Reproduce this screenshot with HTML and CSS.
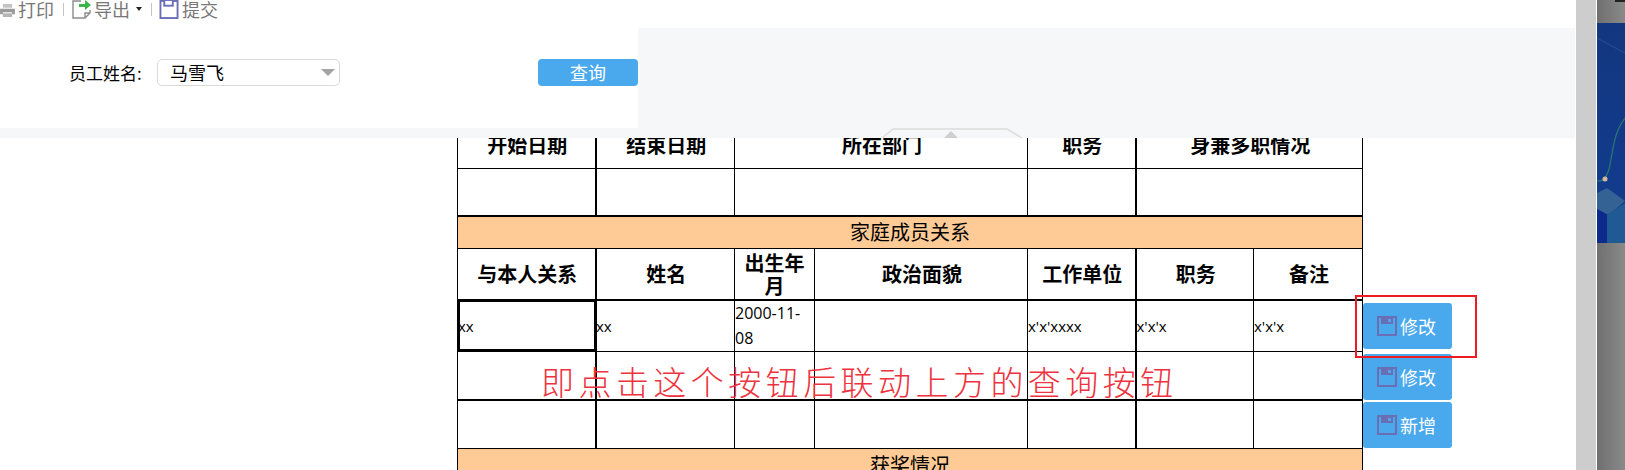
FILE: index.html
```html
<!DOCTYPE html>
<html lang="zh-CN">
<head>
<meta charset="utf-8">
<title>员工信息</title>
<link rel="stylesheet" href="styles.css">
</head>
<body>
<div class="screen">
  <main class="page">
    <table class="sheet">
      <colgroup>
        <col class="c1"><col class="c2"><col class="c3"><col class="c4"><col class="c5"><col class="c6"><col class="c7"><col class="c8">
      </colgroup>
      <tbody>
        <tr class="r-head1">
          <th class="tr">开始日期</th><th>结束日期</th><th colspan="2">所在部门</th><th class="tr">职务</th><th colspan="2">身兼多职情况</th><td class="free"></td>
        </tr>
        <tr class="r-empty1">
          <td class="tr"></td><td></td><td colspan="2"></td><td class="tr"></td><td colspan="2"></td><td class="free"></td>
        </tr>
        <tr class="r-band1 tt">
          <td colspan="7" class="band">家庭成员关系</td><td class="free"></td>
        </tr>
        <tr class="r-head2">
          <th class="tr">与本人关系</th><th>姓名</th><th class="tight">出生年月</th><th>政治面貌</th><th class="tr">工作单位</th><th>职务</th><th>备注</th><td class="free"></td>
        </tr>
        <tr class="r-data tt">
          <td class="sel">xx</td><td>xx</td><td class="date">2000-11-08</td><td></td><td class="tr">x'x'xxxx</td><td>x'x'x</td><td>x'x'x</td>
          <td class="free"><button class="act" type="button"><svg class="disk" viewBox="0 0 20 20"><rect x="1" y="1" width="18" height="18" fill="none" stroke="#6a6fb5" stroke-width="2"/><rect x="4" y="2" width="12" height="6" fill="#6a6fb5"/><rect x="11" y="3" width="3" height="3" fill="#4aa8ec"/></svg>修改</button></td>
        </tr>
        <tr class="r-row">
          <td class="tr"></td><td></td><td></td><td></td><td class="tr"></td><td></td><td></td>
          <td class="free"><button class="act" type="button"><svg class="disk" viewBox="0 0 20 20"><rect x="1" y="1" width="18" height="18" fill="none" stroke="#6a6fb5" stroke-width="2"/><rect x="4" y="2" width="12" height="6" fill="#6a6fb5"/><rect x="11" y="3" width="3" height="3" fill="#4aa8ec"/></svg>修改</button></td>
        </tr>
        <tr class="r-last tt">
          <td class="tr"></td><td></td><td></td><td></td><td class="tr"></td><td></td><td></td>
          <td class="free"><button class="act" type="button"><svg class="disk" viewBox="0 0 20 20"><rect x="1" y="1" width="18" height="18" fill="none" stroke="#6a6fb5" stroke-width="2"/><rect x="4" y="2" width="12" height="6" fill="#6a6fb5"/><rect x="11" y="3" width="3" height="3" fill="#4aa8ec"/></svg>新增</button></td>
        </tr>
        <tr class="r-band2">
          <td colspan="7" class="band">获奖情况</td><td class="free"></td>
        </tr>
      </tbody>
    </table>
    <div class="note">即点击这个按钮后联动上方的查询按钮</div>
    <div class="redbox"></div>
  </main>
  <div class="scrollbar"></div>
  <div class="behind">
    <div class="wall">
      <b class="speck"></b>
      <svg class="wall-art" viewBox="0 0 28 220" preserveAspectRatio="none">
        <polygon points="0,170 10,165 28,178 12,192 0,186" fill="#3d6c96" opacity=".8"/>
        <polygon points="10,192 28,180 28,220 10,220" fill="#1f5a94"/>
        <polygon points="0,186 10,192 10,220 0,220" fill="#0b2a8c"/>
        <path d="M0 158C6 158 8 158 12 146C16 130 16 110 28 95" fill="none" stroke="#2a7a70" stroke-width="1.2"/>
        <circle cx="8" cy="156" r="2.5" fill="#d4b8a0"/>
        <path d="M0 15L28 30" stroke="#2a4f94" stroke-width="1" fill="none"/>
      </svg>
    </div>
  </div>
</div>
<header class="top">
  <div class="left">
    <nav class="tools">
      <span class="tool"><svg class="i-print" viewBox="0 0 16 14"><path d="M3 0H13V4H3Z" fill="#c4c4c4"/><path d="M0 5H16V11H13V9H3V11H0Z" fill="#9a9a9a"/><path d="M3 10H13V14H3Z" fill="#b5b5b5"/></svg>打印</span>
      <i class="sep"></i>
      <span class="tool"><svg class="i-export" viewBox="0 0 19 19"><path d="M9 1H1V18H13L18 13V10M13 18V13H18" fill="none" stroke="#8c8c8c" stroke-width="1.4"/><path d="M7 4H13V0L19 5L13 10V7H7Z" fill="#3bb54a"/></svg>导出<b class="caret"></b></span>
      <i class="sep"></i>
      <span class="tool"><svg class="i-save" viewBox="0 0 20 20"><rect x="1" y="1" width="18" height="18" fill="#fff" stroke="#6a6fb5" stroke-width="2"/><rect x="4" y="1" width="11" height="6" fill="#6a6fb5"/><rect x="6" y="1" width="7" height="4" fill="#fff"/></svg>提交</span>
    </nav>
    <form class="query">
      <label class="lbl">员工姓名:</label>
      <div class="select"><span>马雪飞</span><b class="arrow"></b></div>
      <button class="search" type="button">查询</button>
    </form>
  </div>
  <div class="right">
    <svg class="fold" viewBox="0 0 140 10"><polyline points="0,10 11,1 125,1 140,10" fill="#f6f7f9" stroke="#dcdcdc" stroke-width="1.5"/><polygon points="69,3 62,10 76,10" fill="#cfcfcf"/></svg>
  </div>
</header>
</body>
</html>
```
FILE: styles.css
```css
* { box-sizing: border-box; }
html, body { margin: 0; height: 470px; overflow: hidden; background: #fff; }
body { font-family: "Noto Sans CJK SC", "Liberation Sans", sans-serif; color: #000; position: relative; }

.screen { display: flex; height: 470px; }
.page { position: relative; width: 1576px; padding: 120px 0 0 457px; background: #fff; }
.scrollbar { width: 20px; background: #cdcdcd; }
.behind { flex: 1; border-left: 1px solid #fff; }
.wall { position: relative; height: 100%; background: linear-gradient(90deg, #6f6f6f, #8a8a8a); padding-top: 23px; }
.speck { position: absolute; right: 0; top: 0; width: 10px; height: 2px; background: #222; }
.wall-art { display: block; width: 100%; height: 220px; background: linear-gradient(180deg, #13377f, #123a8a 60%, #0f3f8c); }

.sheet { border-collapse: collapse; table-layout: fixed; width: 996px; }
.c1 { width: 138px; } .c2 { width: 139px; } .c3 { width: 80px; } .c4 { width: 213px; }
.c5 { width: 108px; } .c6 { width: 118px; } .c7 { width: 109px; } .c8 { width: 91px; }

.sheet th, .sheet td { border: 1px solid #000; padding: 0; }
.sheet th { font-size: 20px; font-weight: 700; text-align: center; line-height: 24px; padding-left: 2px; }
.sheet td { font-family: "Open Sans", "Noto Sans CJK SC", sans-serif; font-size: 15px; line-height: 26px; text-align: left; vertical-align: middle; }
.sheet .tight { line-height: 23px; padding-left: 0; }
.sheet .tr { border-right-width: 2px; }
.sheet .tt > td, .sheet .tt > th { border-top-width: 2px; }
.sheet .free { border: 0; padding: 0; vertical-align: middle; }
.sheet .date { font-size: 16px; line-height: 25px; }

.r-head1 { height: 48px; }
.r-empty1 { height: 47px; }
.r-band1 { height: 33px; }
.r-head2 { height: 51px; }
.r-data { height: 51px; }
.r-row { height: 49px; }
.r-last { height: 48px; }
.r-band2 { height: 34px; }
.sheet .band { background: #fecb96; text-align: center; font-family: "Noto Sans CJK SC", sans-serif; font-size: 20px; }
.sheet .r-data .sel { outline: 3px solid #000; outline-offset: -2px; }

.act { display: flex; align-items: center; width: 89px; height: 46px; margin: 2px 0 0 0; padding: 0 0 0 14px; gap: 3px; border: 0; border-radius: 3px; background: #4aa8ec; color: #fff; font: 18px "Noto Sans CJK SC", sans-serif; }
.disk { width: 20px; height: 20px; flex: none; }

.note { position: absolute; left: 541px; top: 359px; font-size: 33px; line-height: 44px; font-weight: 300; letter-spacing: 4.45px; color: #ee3340; white-space: nowrap; }
.redbox { position: absolute; left: 1355px; top: 295px; width: 122px; height: 63px; border: 2px solid #ed1c24; }

.top { position: absolute; left: 0; top: 0; display: flex; width: 1575px; height: 138px; }
.left { width: 638px; height: 128px; background: #fff; }
.right { flex: 1; margin-top: 28px; background: #f6f7f9; position: relative; }
.top::before { content: ""; position: absolute; left: 0; top: 128px; width: 638px; height: 10px; background: #f6f7f9; }

.tools { display: flex; align-items: center; height: 18px; color: #777; font-size: 18px; line-height: 18px; }
.tool { display: flex; align-items: center; }
.i-print { width: 15px; height: 13px; margin: 2px 3px 0 0; flex: none; }
.i-export { width: 19px; height: 19px; margin: 0 3px 0 1px; flex: none; }
.i-save { width: 20px; height: 19px; margin-right: 3px; flex: none; }
.sep { width: 1px; height: 13px; background: #c4c4c4; margin: 0 7px 0 9px; }
.caret { width: 0; height: 0; border: 3.5px solid transparent; border-top: 4px solid #222; border-bottom: 0; margin-left: 6px; }

.query { display: flex; align-items: center; height: 27px; margin: 41px 0 0 69px; }
.lbl { width: 88px; font-size: 17px; }
.select { display: flex; align-items: center; justify-content: space-between; width: 183px; height: 27px; padding: 0 4px 0 12px; border: 1px solid #d9d9d9; border-radius: 5px; font-size: 18px; line-height: 25px; }
.arrow { width: 0; height: 0; border: 7px solid transparent; border-top: 7px solid #a3a3a3; border-bottom: 0; }
.search { width: 100px; height: 27px; margin-left: 198px; padding: 0; border: 0; border-radius: 4px; background: #4aa8ec; color: #fff; font: 18px/27px "Noto Sans CJK SC", sans-serif; }

.fold { position: absolute; left: 244px; top: 100px; width: 140px; height: 10px; }
```
